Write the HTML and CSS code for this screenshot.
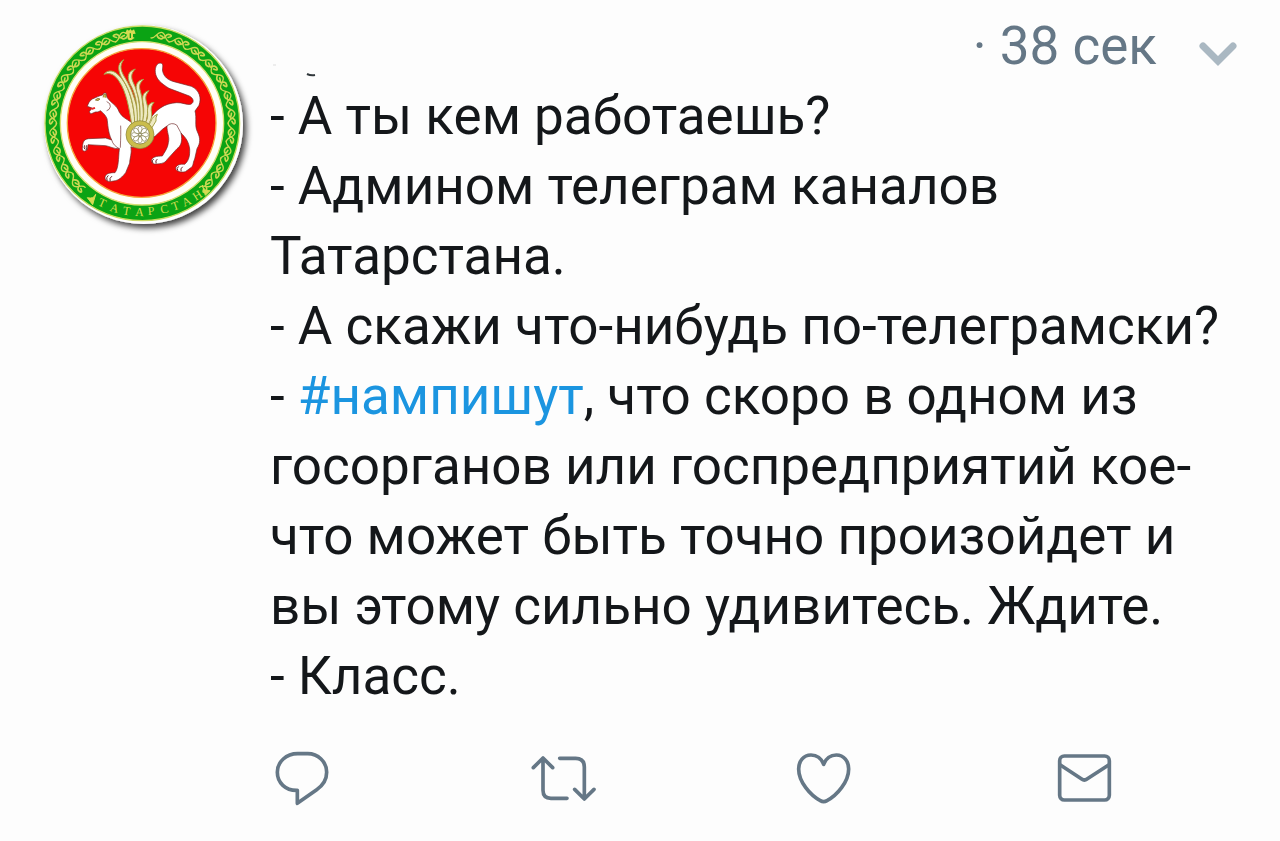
FILE: index.html
```html
<!DOCTYPE html>
<html lang="ru">
<head>
<meta charset="utf-8">
<meta name="viewport" content="width=device-width, initial-scale=1">
<title>Татарстан</title>
<link rel="stylesheet" href="styles.css">
</head>
<body>
<article class="post">
  <svg class="avatar" viewBox="0 0 690 690" role="img" aria-label="Герб Татарстана">
    <defs>
      <filter id="shade" x="-10%" y="-10%" width="130%" height="130%">
        <feDropShadow dx="10" dy="12" stdDeviation="9" flood-color="#000" flood-opacity=".75"/>
      </filter>
      <g id="vine" fill="none" stroke="#cbd853" stroke-width="4" stroke-linecap="round">
        <path d="M-28 -256C-14 -256 -14 -279 0 -279S14 -256 28 -256"/>
        <path d="M-12 -267Q-4 -256 5 -261T-2 -269M12 -265Q15 -280 26 -277T22 -268" stroke-width="5"/>
      </g>
      <g id="vines">
        <use href="#vine" transform="rotate(12)"/><use href="#vine" transform="rotate(24)"/>
        <use href="#vine" transform="rotate(36)"/><use href="#vine" transform="rotate(48)"/>
        <use href="#vine" transform="rotate(60)"/><use href="#vine" transform="rotate(72)"/>
        <use href="#vine" transform="rotate(84)"/><use href="#vine" transform="rotate(96)"/>
        <use href="#vine" transform="rotate(108)"/><use href="#vine" transform="rotate(120)"/>
        <use href="#vine" transform="rotate(132)"/>
      </g>
    </defs>
    <circle cx="341" cy="344" r="298" fill="#fff" filter="url(#shade)"/>
    <circle cx="337" cy="340" r="292" fill="#0ba314" stroke="#c9dc62" stroke-width="4"/>
    <g transform="translate(337 340)">
      <use href="#vines"/>
      <use href="#vines" transform="scale(-1 1)"/>
    </g>
    <path d="M291 56q8 9 10-3 2 12 11 3l5 13-8 1v17q-9 8-16 0V70l-8-1z" transform="translate(36 0)" fill="none"/>
    <path d="M291 58q8 9 10-3 2 12 11 3l5 13-8 1v15q-9 8-16 0V72l-8-1z" fill="#d6dc52"/>
    <path d="M301 70v14" stroke="#0ba314" stroke-width="4"/>
    <path d="M172 563q19 5 25-10l-9 31zM517 525q2 19 23 17l-14 14z" fill="#d6dc52" stroke="#d6dc52" stroke-width="3"/>
    <text class="motto" x="202 238 277 315 354 394 430 463 497" y="585 602 613 617 615 611 602 591 573" rotate="24 16 10 3 -4 -12 -19 -26 -33">ТАТАРСТАН</text>
    <circle cx="336" cy="340" r="245" fill="#fffef6" stroke="#d9df73" stroke-width="4"/>
    <circle cx="335" cy="339" r="223" fill="#f60505" stroke="#f5a53a" stroke-width="4"/>
    <g fill="#fff" stroke="#6e2929" stroke-width="2" stroke-linejoin="round" stroke-linecap="round">
      <path d="M363 323C378 300 402 280 440 278C458 277 471 286 482 283C494 277 491 265 478 258L417 235C393 220 378 207 376 187C374 170 383 156 394 160C402 164 396 173 398 184C402 201 414 210 432 215L484 229C509 240 515 265 507 286L495 303C501 326 493 347 502 365C512 386 511 399 501 416L494 447C487 461 492 468 480 475L466 485C454 488 438 485 437 475C438 465 452 461 464 463C476 453 480 438 479 417C477 397 467 382 453 369C458 394 453 408 441 416L411 449C405 461 388 462 372 462C362 457 362 447 372 442C382 437 390 439 397 438C403 427 414 414 415 398C420 381 410 366 411 348C392 359 382 376 366 385L340 412L303 412C306 431 299 445 299 459L287 488C277 500 267 512 250 513C236 517 224 512 225 501C229 490 239 488 255 488C266 474 265 447 268 416C251 417 239 409 227 407L174 404L172 418C167 426 157 425 157 416C158 405 157 387 176 386L227 384L245 390C233 365 234 342 231 326C226 313 214 304 211 302C205 307 201 305 196 306L182 312L178 305L186 294L172 289C175 280 178 273 187 267C199 262 208 257 218 255L222 249L228 249L231 262C244 281 260 284 268 307C277 322 288 326 304 337L337 331Z"/>
      <path d="M245 390C248 403 258 411 268 416M272 348Q273 369 271 412M411 348Q424 335 440 345L453 369" fill="none"/>
      <path d="M231 275q12 5 10 15t-10 12M303 412l5-20" fill="none"/>
      <path d="M163 407q-3 9 2 11M169 407q-2 8 1 12M234 497q-7 6-3 14M245 499q-8 5-5 13M370 448q-7 4-2 10M381 448q-6 4-3 11M445 470q-7 5-2 11M457 471q-7 5-4 12" fill="none" stroke-width="3"/>
    </g>
    <path d="M196 270q7-8 14-3-5 8-14 3zM219 262l3-10 6 1v10" fill="#cdbb4e" stroke="#775d25" stroke-width="2"/>
    <path d="M184 294l10-3 2 5-11 4z" fill="#e72828"/>
    <g fill="#eeeac2" stroke="#a4a044" stroke-width="3" stroke-linejoin="round">
      <path d="M305 342C297 293 289 246 268 215C254 193 239 187 222 193C234 177 254 181 268 198C292 223 309 265 316 342Z"/>
      <path d="M314 340C313 285 300 242 279 210C263 185 260 160 281 149C266 169 274 185 286 205C307 240 323 282 326 340Z"/>
      <path d="M322 340C323 278 315 248 300 222C290 199 294 184 316 177C301 191 304 205 310 218C325 249 330 285 332 340Z"/>
      <path d="M329 340C333 290 326 262 320 244C315 223 323 211 341 208C327 221 327 229 331 243C338 268 342 304 339 340Z"/>
      <path d="M336 341C346 303 339 285 338 271C336 253 344 245 357 242C345 257 346 264 350 279C357 300 351 322 347 341Z"/>
      <path d="M344 342C358 321 351 309 353 296C354 284 361 278 372 277C359 294 365 303 365 314C365 328 360 334 354 345Z"/>
      <path d="M354 346C367 336 360 323 382 313Q376 324 378 333L364 356Z"/>
    </g>
    <circle cx="330" cy="374" r="42" fill="#cabd4c" stroke="#88813a" stroke-width="2"/>
    <circle cx="330" cy="374" r="28" fill="#fff" stroke="#756f38" stroke-width="2"/>
    <g fill="#fff" stroke="#77713b" stroke-width="2">
      <path id="petal" d="M330 370C321 361 323 350 330 349S339 361 330 370"/>
      <use href="#petal" transform="rotate(45 330 374)"/><use href="#petal" transform="rotate(90 330 374)"/>
      <use href="#petal" transform="rotate(135 330 374)"/><use href="#petal" transform="rotate(180 330 374)"/>
      <use href="#petal" transform="rotate(225 330 374)"/><use href="#petal" transform="rotate(270 330 374)"/>
      <use href="#petal" transform="rotate(315 330 374)"/>
      <circle cx="330" cy="374" r="4"/>
    </g>
  </svg>
  <div class="content">
    <header class="head">
      <svg class="trace" viewBox="0 0 50 20" aria-hidden="true"><path d="M37 13q4 2 8 1" stroke="#30373b" stroke-width="2" fill="none"/><path d="M3 4h3" stroke="#ddd"/></svg>
      <time class="time">· 38 сек</time>
      <button class="icon-button menu" type="button" aria-label="Меню">
        <svg class="chevron" viewBox="0 0 40 28"><path d="M5 6L20 21L35 6"/></svg>
      </button>
    </header>
    <p class="text">- А ты кем работаешь?<br>- Админом телеграм каналов Татарстана.<br>- А скажи что-нибудь по-телеграмски?<br>- <a class="tag" href="#nampishut">#нампишут</a>, что скоро в одном из госорганов или госпредприятий кое-что может быть точно произойдет и вы этому сильно удивитесь. Ждите.<br>- Класс.</p>
    <footer class="actions">
      <button class="icon-button" type="button" aria-label="Ответить">
        <svg class="icon" viewBox="0 0 192 168"><path d="M83 20H113C144 20 170 44 170 76C170 99 158 116 140 128L82 169V130C46 131 22 107 22 76C22 44 49 20 83 20Z"/></svg>
      </button>
      <button class="icon-button" type="button" aria-label="Ретвитнуть">
        <svg class="icon" viewBox="0 0 192 168"><path d="M7 62L36 33L65 62M36 34V130Q36 154 60 154H108M86 34H134Q160 34 160 60V154M131 127L160 156L189 127"/></svg>
      </button>
      <button class="icon-button" type="button" aria-label="Нравится">
        <svg class="icon" viewBox="0 0 192 168"><path d="M98 52C91 34 77 24 60 24C37 24 23 43 23 66C23 105 58 145 88 161Q98 167 108 161C138 145 173 105 173 66C173 43 159 24 136 24C119 24 105 34 98 52Z"/></svg>
      </button>
      <button class="icon-button" type="button" aria-label="Отправить сообщение">
        <svg class="icon" viewBox="0 0 192 168"><rect x="23" y="27" width="149" height="132" rx="14"/><path d="M24 53L89 96Q97 102 105 96L171 53"/></svg>
      </button>
    </footer>
  </div>
</article>
</body>
</html>
```
FILE: styles.css
```css
body {
  margin: 0;
  background: #fdfdfd;
  color: #14171a;
  font-family: Roboto, "Noto Sans", sans-serif;
}

.post {
  display: flex;
  align-items: flex-start;
  gap: 10px;
  padding: 10px 40px 32px 30px;
}

.avatar {
  flex: none;
  width: 230px;
  height: 230px;
}

.motto {
  fill: #d6dc52;
  font-family: "Liberation Serif", serif;
  font-size: 36px;
}

.content {
  flex: 1;
  min-width: 0;
}

.head {
  display: flex;
  align-items: center;
  height: 71px;
}

.trace {
  width: 50px;
  height: 20px;
  align-self: flex-end;
  margin-right: auto;
}

.time {
  color: #657786;
  font-size: 53px;
  line-height: 70px;
}

.icon-button {
  display: block;
  padding: 0;
  border: 0;
  background: none;
  cursor: pointer;
}

.menu {
  margin: 16px 2px 0 41px;
}

.chevron {
  display: block;
  width: 40px;
  height: 28px;
  fill: none;
  stroke: #aab8c2;
  stroke-width: 7;
  stroke-linecap: round;
}

.text {
  margin: 0;
  font-size: 53px;
  line-height: 70px;
}

.tag {
  color: #1b95e0;
  text-decoration: none;
}

.actions {
  display: flex;
  justify-content: space-between;
  margin: 36px 124px 0 0;
}

.icon {
  display: block;
  width: 64px;
  height: 56px;
  overflow: visible;
  fill: none;
  stroke: #657786;
  stroke-width: 11;
  stroke-linecap: round;
  stroke-linejoin: round;
}
```
